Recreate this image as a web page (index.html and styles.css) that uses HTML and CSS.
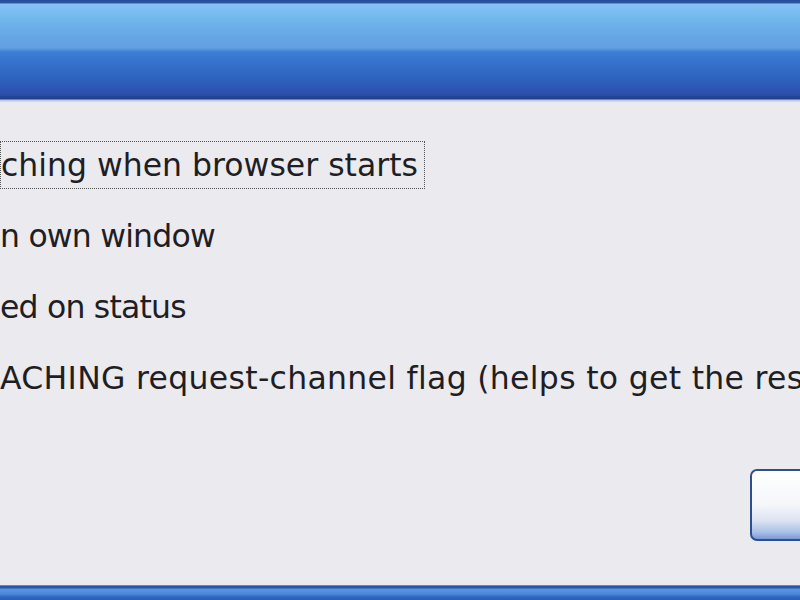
FILE: index.html
```html
<!DOCTYPE html>
<html>
<head>
<meta charset="utf-8">
<link rel="stylesheet" href="styles.css">
</head>
<body>
<div class="window">
  <div class="titlebar"></div>
  <div class="content">
    <div class="options">
      <div class="opt"><span class="focus">ching when browser starts</span></div>
      <div class="opt">n own window</div>
      <div class="opt">ed on status</div>
      <div class="opt wide">ACHING request-channel flag (helps to get the res</div>
    </div>
    <div class="buttons"><div class="btn"></div></div>
  </div>
  <div class="bottombar"></div>
</div>
</body>
</html>
```
FILE: styles.css
```css
html, body { margin: 0; padding: 0; }
body { width: 800px; height: 600px; overflow: hidden; background: #ebeaef; }
.window { width: 800px; height: 600px; display: flex; flex-direction: column; }
.titlebar {
  height: 102px; flex: none;
  background: linear-gradient(to bottom,
    #234c93 0px, #2c5aa6 3px, #8cc0f4 4px, #80c0f2 8px, #72b8ec 18px,
    #66a6e6 36px, #62a0e2 48px, #3e7ed6 52px, #3772cc 62px, #2e66c0 76px,
    #2e56b6 88px, #2b4eaa 95px, #23428f 97px, #26408a 99px, #b8c0e6 100px, #dcdcf0 102px);
}
.content { flex: 1; display: flex; flex-direction: column; }
.options {
  padding-top: 37px;
  font-family: "DejaVu Sans", "Liberation Sans", sans-serif;
  font-size: 31.5px; color: #1e1e24;
  overflow: hidden;
}
.opt { height: 71px; line-height: 52px; white-space: nowrap; }
.opt:nth-child(2), .opt:nth-child(3) { letter-spacing: -0.8px; }
.opt.wide { letter-spacing: 0.3px; }
.focus { border: 1px dotted #555; padding: 0 6px 0 0; display: inline-block; line-height: 46px; }
.buttons { display: flex; justify-content: flex-end; margin-top: 46px; }
.btn {
  width: 60px; height: 68px; margin-right: -14px;
  border: 2px solid #2c4f90; border-radius: 7px;
  background: linear-gradient(to bottom, #ffffff 0%, #f4f6fa 50%, #dde5f2 72%, #a9c0e6 90%, #7a9ad4 100%);
}
.bottombar {
  height: 15px; flex: none;
  background: linear-gradient(to bottom, #9fb2d8 0px, #2a58a8 1px, #2a58a8 3px, #5a96e0 4px, #4a88d8 9px, #2f66c2 12px, #2a5cb8 15px);
}
```
